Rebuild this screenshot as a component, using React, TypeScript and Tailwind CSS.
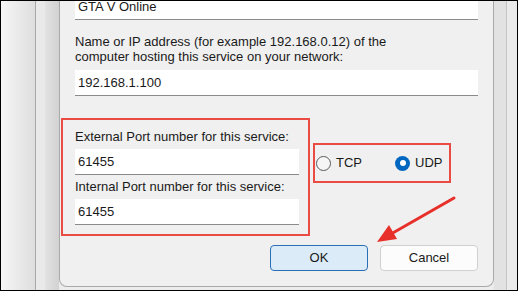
const Field = ({ value, className = "" }: { value: string; className?: string }) => (
  <div className={`flex h-[26px] items-center border-b border-[#8a8a8a] bg-white pl-[3px] text-[13px] text-[#1a1a1a] ${className}`}>
    {value}
  </div>
);

const Radio = ({ label, checked }: { label: string; checked?: boolean }) => (
  <label className="flex items-center gap-[5px]">
    {checked ? (
      <span className="flex h-[15px] w-[15px] items-center justify-center rounded-full bg-[#0067c0]">
        <span className="h-[6px] w-[6px] rounded-full bg-white" />
      </span>
    ) : (
      <span className="h-[15px] w-[15px] rounded-full border border-[#5a5a5a] bg-[#f6f6f6]" />
    )}
    <span>{label}</span>
  </label>
);

const App = () => {
  return (
    <div
      className="relative flex h-[291px] w-[518px] overflow-hidden border border-black bg-[#ececec] text-[13px] text-[#1a1a1a]"
      style={{ fontFamily: '"Liberation Sans", Arial, sans-serif' }}
    >
      {/* windows behind the dialog */}
      <div className="w-[34px] bg-gradient-to-r from-[#f6f6f6] to-[#dedede]" />
      <div className="w-px bg-[#a8a8a8]" />
      <div className="w-[9px] bg-[#e9e9e9]" />
      <div className="w-[14px] bg-gradient-to-r from-[#e2e2e2] to-[#d2d2d2]" />

      {/* dialog */}
      <div className="mb-[3px] flex w-[435px] flex-col rounded-b-[8px] border-x border-b border-[#a9a9a9] bg-[#f0f0f0] px-[15px]">
        <Field value="GTA V Online" className="-mt-[7px]" />

        <p className="mt-[14px] leading-[15px]">
          Name or IP address (for example 192.168.0.12) of the
          <br />
          computer hosting this service on your network:
        </p>
        <Field value="192.168.1.100" className="mt-[6px]" />

        <div className="mt-[22px] flex items-start">
          <div className="-ml-[14px] w-[249px] border-2 border-[#ea4b43] pb-[9px] pl-[12px] pr-[9px] pt-[9px]">
            <p className="leading-[15px]">External Port number for this service:</p>
            <Field value="61455" className="mt-[5px]" />
            <p className="mt-[4px] leading-[15px]">Internal Port number for this service:</p>
            <Field value="61455" className="mt-[5px]" />
          </div>
          <div className="ml-[3px] mt-[25px] flex h-[40px] w-[138px] items-center gap-[33px] border-2 border-[#ea4b43] pl-[1px]">
            <Radio label="TCP" />
            <Radio label="UDP" checked />
          </div>
        </div>

        <div className="mt-[9px] flex justify-end gap-[12px]">
          <button className="flex h-[26px] w-[98px] items-center justify-center rounded-[4px] border border-[#2a6fb5] bg-[#dcebf8]">
            OK
          </button>
          <button className="flex h-[26px] w-[98px] items-center justify-center rounded-[4px] border border-[#d0d0d0] bg-[#fcfcfc]">
            Cancel
          </button>
        </div>
      </div>

      <div className="w-[12px] bg-[#e2e2e2]" />
      <div className="w-px bg-[#c4c4c4]" />
      <div className="flex-1 bg-[#ebebeb]" />

      {/* annotation arrow */}
      <svg className="absolute left-0 top-0" width="518" height="291" viewBox="0 0 518 291">
        <line x1="453" y1="197" x2="390" y2="233" stroke="#e8302a" strokeWidth="3" strokeLinecap="round" />
        <polygon points="376,241 388,224 396,238" fill="#e8302a" />
      </svg>
    </div>
  );
};

export default App;
